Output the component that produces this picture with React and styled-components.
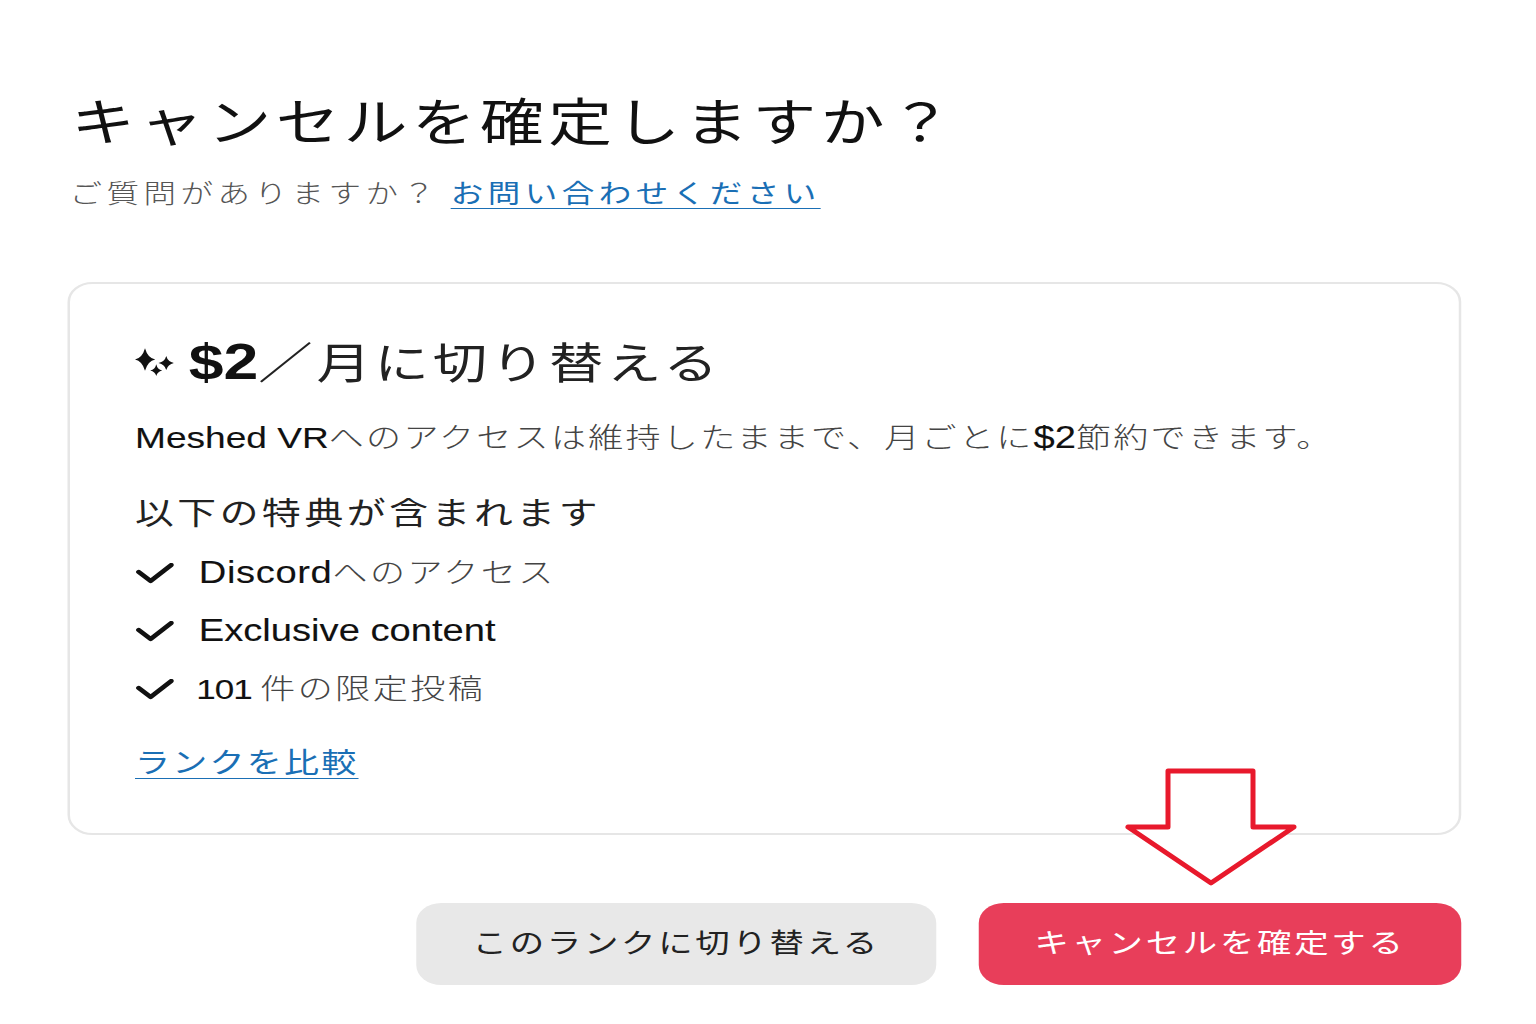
import React from 'react'
import styled, { createGlobalStyle } from 'styled-components'

const GlobalStyle = createGlobalStyle`
  html, body {
    margin: 0;
    background: #fff;
    overflow: hidden;
  }
  body {
    font-family: "Liberation Sans", "Noto Sans CJK JP", sans-serif;
    font-weight: 300;
    color: #444;
  }
`

const Screen = styled.div`
  position: relative;
  width: 1536px;
  height: 1024px;
  overflow: hidden;
`

/* the whole capture is stretched sideways, so the page is laid out narrower and scaled */
const Stretched = styled.main`
  width: 1229px;
  box-sizing: border-box;
  padding: 94px 60px 0 54px;
  transform: scaleX(1.25);
  transform-origin: 0 0;
`

const Title = styled.h1`
  margin: 0 0 0 3px;
  font-size: 51px;
  line-height: 60px;
  font-weight: 400;
  letter-spacing: 3.5px;
  color: #111;
`

const Question = styled.p`
  margin: 20px 0 0 1.5px;
  font-size: 26px;
  line-height: 40px;
  letter-spacing: 3.6px;
  color: #555;
`

const TextLink = styled.a`
  color: #1a6fb5;
  font-weight: 400;
  text-decoration: underline;
  text-decoration-thickness: 1px;
  text-underline-offset: 5px;
  margin-left: ${p => p.$offset || 0}px;
`

const Card = styled.section`
  margin-top: 68px;
  height: 553px;
  box-sizing: border-box;
  padding: 55px 52px 0;
  border: 2px solid #e6e6e6;
  border-radius: 20px;
  background: #fff;
`

const PlanTitle = styled.h2`
  display: flex;
  align-items: center;
  gap: 12px;
  margin: 0;
  font-size: 43.5px;
  line-height: 50px;
  font-weight: 400;
  letter-spacing: 3px;
  color: #222;
`

/* latin runs sit larger and tighter than the japanese around them */
const Latin = styled.span`
  font-size: ${p => p.$size || 1.09}em;
  line-height: 0;
  font-weight: ${p => (p.$bold ? 700 : 400)};
  letter-spacing: ${p => p.$spacing || 0}px;
  margin-left: ${p => p.$shift || 0}px;
  color: #111;
  -webkit-text-stroke: ${p => (p.$bold ? 0 : 0.1)}px #111;
`

const Body = styled.p`
  margin: 30px 0 0;
  font-size: 28px;
  line-height: 40px;
  letter-spacing: 1.85px;
  white-space: nowrap;
`

const PerksHeading = styled.h3`
  margin: 35px 0 0;
  font-size: 31px;
  line-height: 40px;
  font-weight: 400;
  letter-spacing: 2.9px;
  color: #222;
`

const PerkList = styled.ul`
  display: flex;
  flex-direction: column;
  gap: 18px;
  margin: 20px 0 0;
  padding: 0;
  list-style: none;
`

const Perk = styled.li`
  display: flex;
  align-items: center;
  gap: 20px;
  height: 40px;
  font-size: 28px;
  line-height: 40px;
  letter-spacing: 2px;
`

const CompareLine = styled.p`
  margin: 34px 0 0;
  font-size: 28px;
  line-height: 40px;
  letter-spacing: 1.8px;
`

const Actions = styled.footer`
  display: flex;
  justify-content: flex-end;
  gap: 34px;
  margin-top: 68px;
`

const ActionButton = styled.button`
  width: ${p => p.$width}px;
  height: 82px;
  padding: 0 0 6px;
  border: 0;
  border-radius: 20px;
  font-family: inherit;
  font-weight: 400;
  font-size: 27.5px;
  letter-spacing: 2.2px;
  background: ${p => (p.$danger ? '#e83e5a' : '#e8e8e8')};
  color: ${p => (p.$danger ? '#fff' : '#222')};
`

const SparkleIcon = styled.svg`
  margin-bottom: 4px;
`

const ArrowMark = styled.svg`
  position: absolute;
  left: 1120px;
  top: 764px;
`

const Sparkles = () => (
  <SparkleIcon width="31" height="28" viewBox="0 0 31 28" fill="#111">
    <path d="M8 .2 Q10.2 10 16.2 11.5 Q10.2 13 8 22.8 Q5.8 13 -.2 11.5 Q5.8 10 8 .2Z" />
    <path d="M25 8 Q26.2 13.6 31.2 15 Q26.2 16.4 25 22 Q23.8 16.4 18.8 15 Q23.8 13.6 25 8Z" />
    <path d="M17 16.2 Q17.9 21.4 21.8 22.5 Q17.9 23.6 17 28 Q16.1 23.6 12.2 22.5 Q16.1 21.4 17 16.2Z" />
  </SparkleIcon>
)

const Check = () => (
  <svg width="31" height="22" viewBox="0 0 31 22" fill="none" stroke="#111" strokeWidth="4.2" strokeLinecap="round" strokeLinejoin="round">
    <path d="M3 9 L12.5 18 L29 2" />
  </svg>
)

export default function App() {
  return (
    <Screen>
      <GlobalStyle />
      <Stretched>
        <Title>キャンセルを確定しますか？</Title>
        <Question>
          ご質問がありますか？<TextLink href="#" $offset={9}>お問い合わせください</TextLink>
        </Question>
        <Card>
          <PlanTitle>
            <Sparkles />
            <span><Latin $bold $size={1.15}>$2</Latin>／月に切り替える</span>
          </PlanTitle>
          <Body><Latin $size={1.06}>Meshed VR</Latin>へのアクセスは維持したままで、月ごとに<Latin>$2</Latin>節約できます。</Body>
          <PerksHeading>以下の特典が含まれます</PerksHeading>
          <PerkList>
            <Perk><Check /><span><Latin $spacing={0.5}>Discord</Latin>へのアクセス</span></Perk>
            <Perk><Check /><span><Latin>Exclusive content</Latin></span></Perk>
            <Perk><Check /><span><Latin $size={1} $spacing={-0.8} $shift={-2}>101 </Latin>件の限定投稿</span></Perk>
          </PerkList>
          <CompareLine><TextLink href="#">ランクを比較</TextLink></CompareLine>
        </Card>
        <Actions>
          <ActionButton $width={416}>このランクに切り替える</ActionButton>
          <ActionButton $width={386} $danger>キャンセルを確定する</ActionButton>
        </Actions>
      </Stretched>
      <ArrowMark width="184" height="128" viewBox="1120 764 184 128">
        <path
          d="M1168 771 H1253 V827 H1294 L1211 883 L1128 827 H1168 Z"
          fill="#fff"
          stroke="#e8192c"
          strokeWidth="5"
          strokeLinejoin="round"
        />
      </ArrowMark>
    </Screen>
  )
}
